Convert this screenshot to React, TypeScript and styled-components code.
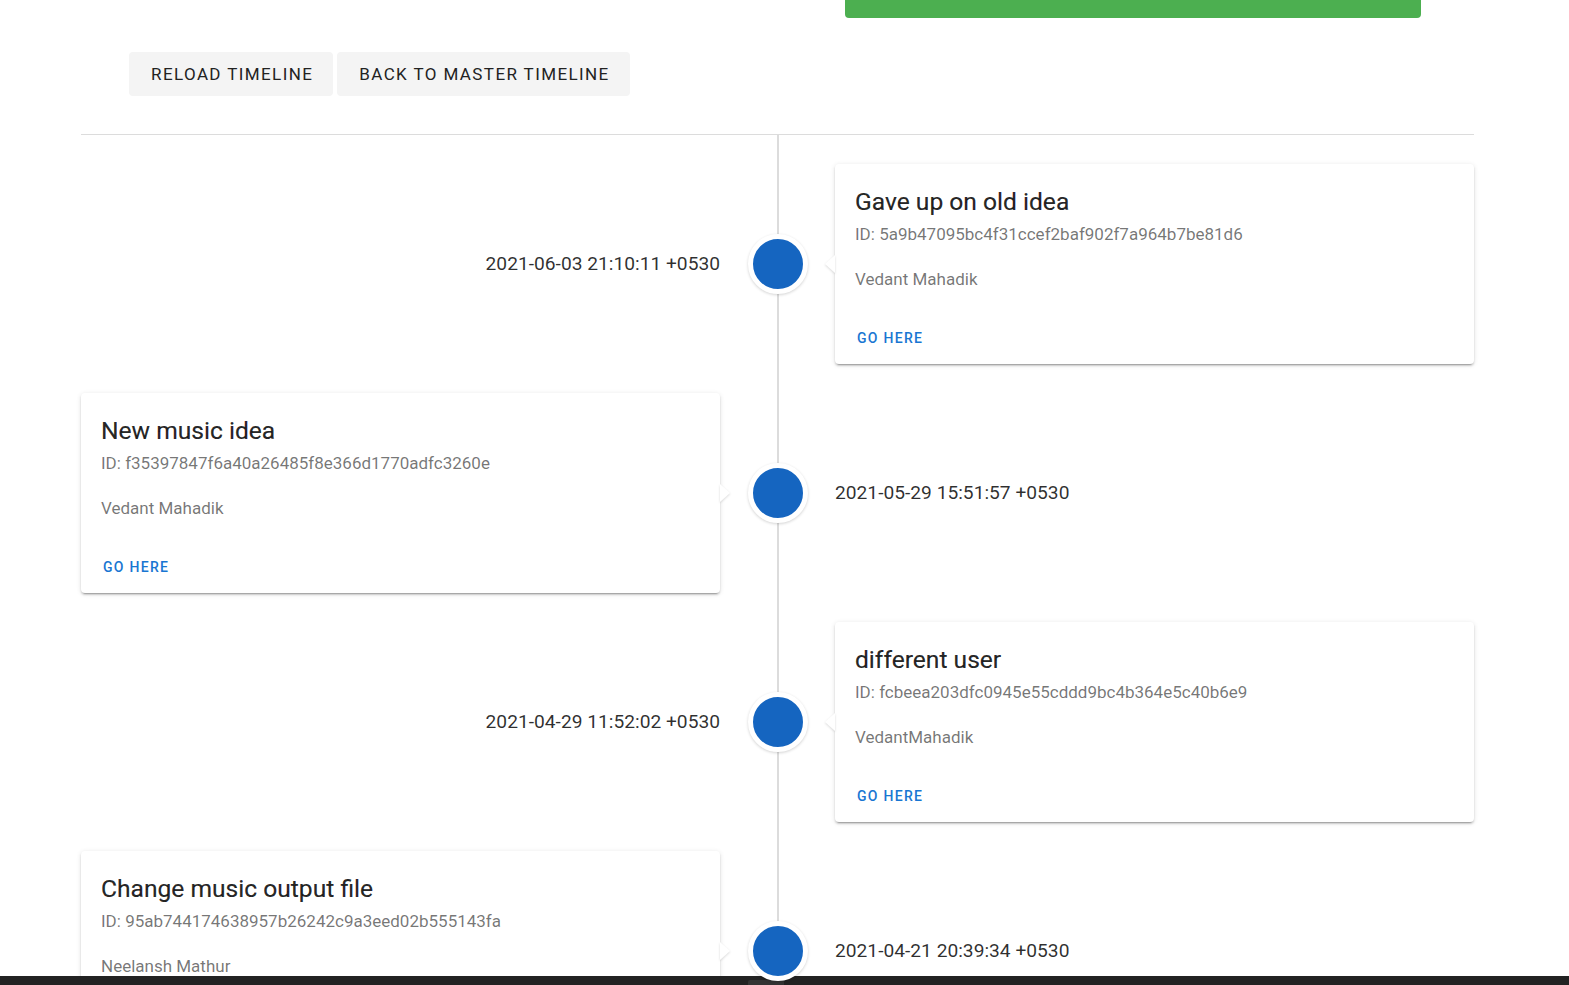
import React from "react";
import styled, { createGlobalStyle } from "styled-components";

const Global = createGlobalStyle`
  html, body { margin: 0; padding: 0; background: #fff; }
  body { font-family: Roboto, "Noto Sans", Arial, sans-serif; color: rgba(0,0,0,0.87); overflow: hidden; }
  * { box-sizing: border-box; }
`;

const Page = styled.div`
  width: 1569px;
  min-height: 985px;
`;

const TopStrip = styled.div`
  margin-left: 845px;
  width: 576px;
  height: 18px;
  background: #4caf50;
  border-radius: 0 0 4px 4px;
`;

const ButtonRow = styled.div`
  display: flex;
  gap: 4px;
  margin-top: 34px;
  padding-left: 129px;
`;

const GreyButton = styled.button`
  height: 44px;
  padding: 0 20px 0 22px;
  border: none;
  border-radius: 4px;
  background: #f4f4f4;
  color: #222;
  font-family: Roboto, Arial, sans-serif;
  font-size: 17px;
  font-weight: 400;
  letter-spacing: 1.4px;
  text-transform: uppercase;
  cursor: pointer;
`;

const Divider = styled.hr`
  margin: 38px 0 0 81px;
  width: 1393px;
  border: none;
  border-top: 1px solid #dcdcdc;
  height: 0;
`;

const Timeline = styled.div`
  position: relative;
  margin: 0 0 0 81px;
  width: 1393px;
  &::before {
    content: "";
    position: absolute;
    top: 0;
    bottom: 0;
    left: 50%;
    width: 2px;
    margin-left: -1px;
    background: #dcdcdc;
  }
`;

const Item = styled.div`
  position: relative;
  display: grid;
  grid-template-columns: 639px 115px 639px;
  align-items: center;
  padding-top: 29px;
  height: 229px;
`;

const Card = styled.div<{ $side: "left" | "right" }>`
  position: relative;
  height: 200px;
  background: #fff;
  border-radius: 4px;
  box-shadow: 0px 3px 1px -2px rgba(0,0,0,0.2), 0px 2px 2px 0px rgba(0,0,0,0.14), 0px 1px 5px 0px rgba(0,0,0,0.12);
  padding: 22px 20px 0;
  display: flex;
  flex-direction: column;
  grid-column: ${(p) => (p.$side === "left" ? 1 : 3)};
  grid-row: 1;
  &::after {
    content: "";
    position: absolute;
    top: 50%;
    margin-top: -9px;
    width: 0;
    height: 0;
    border-top: 9px solid transparent;
    border-bottom: 9px solid transparent;
    filter: drop-shadow(0 1px 1px rgba(0,0,0,0.15));
    ${(p) =>
      p.$side === "left"
        ? `left: 100%; border-left: 10px solid #fff;`
        : `right: 100%; border-right: 10px solid #fff;`}
  }
`;

const Title = styled.h2`
  margin: 0;
  font-size: 24.6px;
  font-weight: 400;
  line-height: 32px;
  color: rgba(0,0,0,0.87);
  -webkit-text-stroke: 0.2px rgba(0,0,0,0.87);
`;

const Meta = styled.p<{ $gap: number }>`
  margin: ${(p) => p.$gap}px 0 0;
  font-size: 17px;
  line-height: 24px;
  font-weight: 400;
  color: rgba(0,0,0,0.55);
`;

const GoButton = styled.button`
  align-self: flex-start;
  margin: 29px 0 0 -6px;
  height: 36px;
  padding: 0 8px;
  border: none;
  background: transparent;
  color: #1976d2;
  font-family: Roboto, Arial, sans-serif;
  font-size: 14px;
  font-weight: 500;
  letter-spacing: 1.3px;
  text-transform: uppercase;
  cursor: pointer;
`;

const DotCell = styled.div`
  grid-column: 2;
  grid-row: 1;
  display: flex;
  justify-content: center;
  align-items: center;
  position: relative;
  z-index: 1;
`;

const Dot = styled.div`
  width: 60px;
  height: 60px;
  border-radius: 50%;
  background: #1565c0;
  border: 5px solid #fff;
  box-shadow: 0 1px 3px rgba(0,0,0,0.18);
`;

const DateText = styled.div<{ $side: "left" | "right" }>`
  grid-column: ${(p) => (p.$side === "left" ? 1 : 3)};
  grid-row: 1;
  text-align: ${(p) => (p.$side === "left" ? "right" : "left")};
  font-size: 19.2px;
  line-height: 24px;
  color: rgba(0,0,0,0.82);
`;

const BottomBar = styled.div`
  position: fixed;
  left: 0;
  right: 0;
  bottom: 0;
  height: 9px;
  background: #222;
  &::after {
    content: "";
    position: absolute;
    left: 748px;
    top: 4px;
    width: 36px;
    height: 5px;
    background: #333;
    border-radius: 2px 2px 0 0;
  }
`;

type Commit = {
  title: string;
  id: string;
  author: string;
  date: string;
  side: "left" | "right";
};

const commits: Commit[] = [
  { title: "Gave up on old idea", id: "5a9b47095bc4f31ccef2baf902f7a964b7be81d6", author: "Vedant Mahadik", date: "2021-06-03 21:10:11 +0530", side: "right" },
  { title: "New music idea", id: "f35397847f6a40a26485f8e366d1770adfc3260e", author: "Vedant Mahadik", date: "2021-05-29 15:51:57 +0530", side: "left" },
  { title: "different user", id: "fcbeea203dfc0945e55cddd9bc4b364e5c40b6e9", author: "VedantMahadik", date: "2021-04-29 11:52:02 +0530", side: "right" },
  { title: "Change music output file", id: "95ab744174638957b26242c9a3eed02b555143fa", author: "Neelansh Mathur", date: "2021-04-21 20:39:34 +0530", side: "left" },
];

export default function App() {
  return (
    <Page>
      <Global />
      <TopStrip />
      <ButtonRow>
        <GreyButton>Reload Timeline</GreyButton>
        <GreyButton>Back to Master Timeline</GreyButton>
      </ButtonRow>
      <Divider />
      <Timeline>
        {commits.map((c) => (
          <Item key={c.id}>
            <Card $side={c.side === "right" ? "right" : "left"}>
              <Title>{c.title}</Title>
              <Meta $gap={4}>ID: {c.id}</Meta>
              <Meta $gap={21}>{c.author}</Meta>
              <GoButton>Go Here</GoButton>
            </Card>
            <DotCell>
              <Dot />
            </DotCell>
            <DateText $side={c.side === "right" ? "left" : "right"}>{c.date}</DateText>
          </Item>
        ))}
      </Timeline>
      <BottomBar />
    </Page>
  );
}
